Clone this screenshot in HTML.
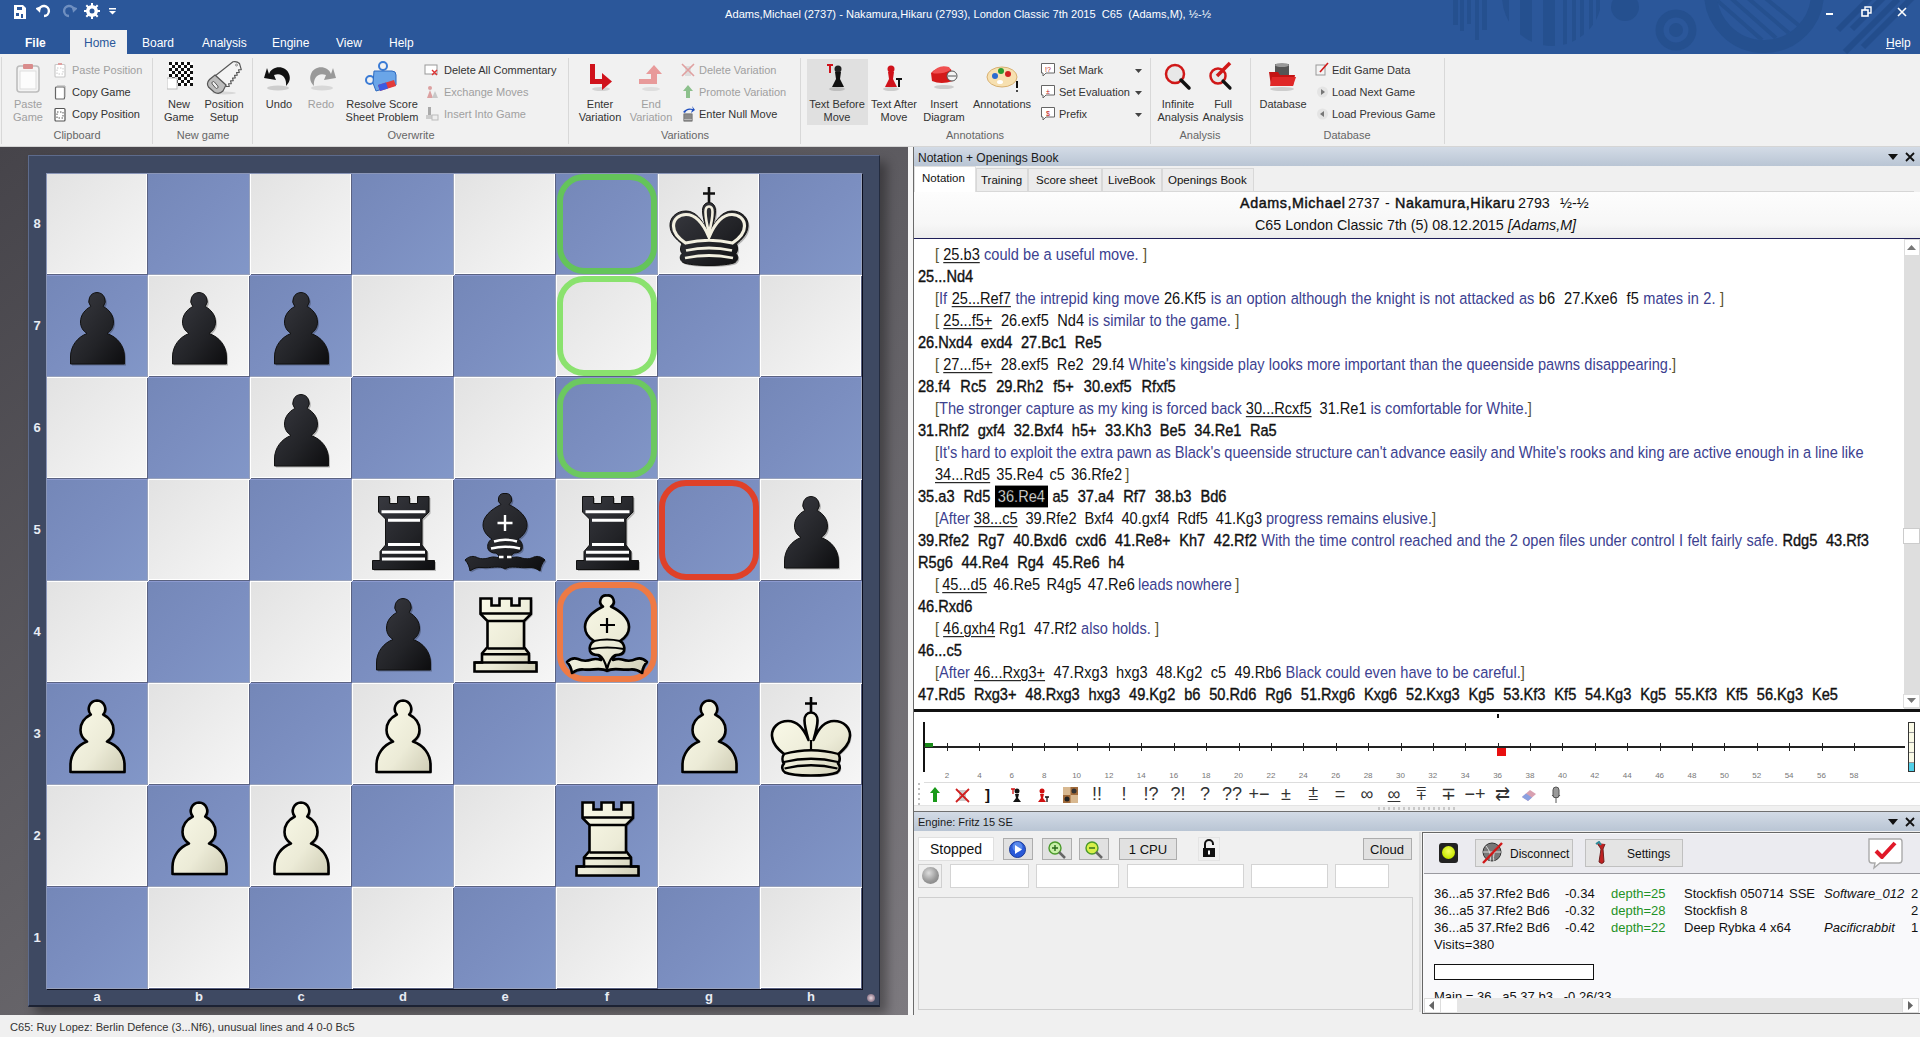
<!DOCTYPE html>
<html><head><meta charset="utf-8"><style>
*{box-sizing:border-box;margin:0;padding:0}
html,body{width:1920px;height:1037px;overflow:hidden;background:#f0f0f0;font-family:"Liberation Sans",sans-serif;position:relative}
.a{position:absolute}
.t{position:absolute;white-space:nowrap;line-height:1}
#title{left:0;top:0;width:1920px;height:54px;background:#2b579a;overflow:hidden}
#ribbon{left:0;top:54px;width:1920px;height:93px;background:#f1f1f1;border-bottom:1px solid #d5d5d5}
#boardpanel{left:0;top:147px;width:908px;height:868px;background:linear-gradient(145deg,#46444a 0%,#615f64 50%,#7d7a7f 100%)}
#split{left:908px;top:147px;width:5px;height:868px;background:#f6f6f6}
#right{left:913px;top:147px;width:1007px;height:868px;background:#f0f0f0;border-left:1px solid #6a6a6a}
#status{left:0;top:1015px;width:1920px;height:22px;background:#f0f0f0}
.sl{width:102px;height:102px;background:linear-gradient(135deg,#e2e2e2 0%,#ececec 50%,#f6f6f6 100%);box-shadow:inset 1px 1px 0 #fff,inset -1px -1px 0 #5a6282,inset -2px -2px 0 #fff}
.sd{width:102px;height:102px;background:linear-gradient(135deg,#7487b8 0%,#7b8ec0 50%,#8297c8 100%);box-shadow:inset 0 1px 0 #8c9ad0,inset -1px -1px 0 #98a2bc}
.mk{width:100px;height:100px;border:6px solid;border-radius:27px}
.pc{width:102px;height:102px;overflow:visible}
.pt{left:914px;width:1006px;height:19px;background:linear-gradient(180deg,#d3dbe6 0%,#b9c5d4 100%)}
.tab{top:168px;height:24px;background:#ececec;border:1px solid #d8d8d8}
.hd{font-size:14.3px;color:#111}
.sb{font-weight:normal;-webkit-text-stroke:0.45px #111;letter-spacing:0.6px}
.nl{position:absolute;white-space:nowrap;font-size:14.6px;line-height:22px;color:#111;transform:scaleY(1.09);transform-origin:0 5.7px}
.cm{color:#3c4190}
.main .mv{-webkit-text-stroke:0.35px #111}
.nl .u{-webkit-text-stroke:0}
.hl{-webkit-text-stroke:0.35px #fff}
.br{color:#5a5430}
.u{text-decoration:underline;text-underline-offset:2px}
.hl{background:#000;color:#fff;padding:2px 3px}
.crd{color:#e8ecf4;font-weight:bold;font-size:13px}
</style></head><body>
<svg width="0" height="0" style="position:absolute">
<defs>
<linearGradient id="gb" x1="0" y1="0" x2="1" y2="1"><stop offset="0" stop-color="#3a3b42"/><stop offset="0.6" stop-color="#222327"/><stop offset="1" stop-color="#0d0d0f"/></linearGradient>
<linearGradient id="gw" x1="0" y1="0" x2="1" y2="1"><stop offset="0" stop-color="#fbfbea"/><stop offset="0.6" stop-color="#ecebd7"/><stop offset="1" stop-color="#cfcdb5"/></linearGradient>
<!-- pawn shape -->
<path id="pawnS" d="M51,17.5 a8.5,8.5 0 0 1 6.2,14 C63,34.5 67.5,40 67.5,47 C67.5,52 65,56 61,58.5 C71.5,62 78.5,71 78.5,82 L78.5,89 L24.5,89 L24.5,82 C24.5,71 31.5,62 41,58.5 C37,56 34.5,52 34.5,47 C34.5,40 39,34.5 44.8,31.5 A8.5,8.5 0 0 1 51,17.5 Z"/>
<g id="bp"><use href="#pawnS" transform="translate(1.5,1.5)" fill="#000" opacity=".25"/><use href="#pawnS" fill="url(#gb)" stroke="#111" stroke-width="1"/></g>
<g id="wp"><use href="#pawnS" transform="translate(1.5,1.5)" fill="#000" opacity=".25"/><use href="#pawnS" fill="url(#gw)" stroke="#000" stroke-width="2.6" stroke-linejoin="round"/></g>
<!-- rook shape -->
<path id="rookS" d="M26.5,17.5 L37.5,17.5 L37.5,24.5 L45.5,24.5 L45.5,17.5 L57.5,17.5 L57.5,24.5 L65.5,24.5 L65.5,17.5 L77,17.5 L77,33 L70,40 L70,66 L75,72.5 L75,81.5 L82.5,81.5 L82.5,90.5 L20.5,90.5 L20.5,81.5 L28,81.5 L28,72.5 L33.5,66 L33.5,40 L26.5,33 Z"/>
<g id="br"><use href="#rookS" transform="translate(1.5,1.5)" fill="#000" opacity=".25"/><use href="#rookS" fill="url(#gb)" stroke="#111" stroke-width="1"/>
<path d="M29.5,32.7 L73.5,32.7 M36,41.3 L68,41.3 M36,65.4 L68,65.4 M30,73.3 L73,73.3 M30,80 L73,80" stroke="#fff" stroke-width="3" fill="none"/></g>
<g id="wr"><use href="#rookS" transform="translate(1.5,1.5)" fill="#000" opacity=".25"/><use href="#rookS" fill="url(#gw)" stroke="#000" stroke-width="2.6" stroke-linejoin="miter"/>
<path d="M26.5,32.5 L77,32.5 M33.5,40 L70,40 M33.5,67.5 L70,67.5 M28,73.3 L75,73.3 M20.5,81.5 L82.5,81.5" stroke="#000" stroke-width="2.4" fill="none"/></g>
<!-- bishop -->
<path id="bishS" d="M51,14.5 A6,6 0 0 1 55,25.5 C66,31 73,38 73,46 C73,52 69,57 64,60 C68,62 69,67 68,70 C67,73 63,74 60,74 C58,75 57,77 57,79 C60,78 63,77.5 66,78.5 C72,80.5 76,80 80,78 C84,76.5 88,78 91,81 C88,84 86.5,88 86,92 C82,89 78,88 74,88.5 C66,89.5 56,86 51,90 C46,86 36,89.5 28,88.5 C24,88 20,89 16,92 C15.5,88 14,84 11,81 C14,78 18,76.5 22,78 C26,80 30,80.5 36,78.5 C39,77.5 42,78 45,79 C45,77 44,75 42,74 C39,74 35,73 34,70 C33,67 34,62 38,60 C33,57 29,52 29,46 C29,38 36,31 47,25.5 A6,6 0 0 1 51,14.5 Z"/>
<g id="bb"><use href="#bishS" transform="translate(1.5,1.5)" fill="#000" opacity=".25"/><use href="#bishS" fill="url(#gb)" stroke="#111" stroke-width="1"/>
<path d="M51,36 L51,52 M43.5,44 L58.5,44 M40,62.5 Q51,59 63,62.5 M37,69.5 Q51,66 66,69.5 M45,78 h4.5 M53,78 h4.5" stroke="#fff" stroke-width="2.4" fill="none"/></g>
<g id="wb"><use href="#bishS" transform="translate(1.5,1.5)" fill="#000" opacity=".25"/><use href="#bishS" fill="url(#gw)" stroke="#000" stroke-width="2.6" stroke-linejoin="round"/>
<path d="M51,37 L51,52 M44,44 L59,44 M38,60 Q51,57 64,60 M35,68 Q51,65 68,68 M43,74 C47,76 49,80 51,88.5 M59,74 C55,76 53,80 51,88.5" stroke="#000" stroke-width="2.2" fill="none"/></g>
<!-- king -->
<path id="kingS" d="M51,29.5 C55,29.5 57.5,33 57.5,37.5 C57.5,43 55.5,50 53.5,57 C58,46 65,38 74,38 C84,38 90.5,45 90,53 C89.5,61 84,66 78.5,71 C80,74 80,78 78,80.5 C80.5,83 80.5,87 77,89.5 C68,93.5 34,93.5 25,89.5 C21.5,87 21.5,83 24,80.5 C22,78 22,74 24,71 C18,66 12.5,61 12,53 C11.5,45 18,38 28,38 C37,38 44,46 48.5,57 C46.5,50 44.5,43 44.5,37.5 C44.5,33 47,29.5 51,29.5 Z"/>
<g id="bk"><use href="#kingS" transform="translate(1.5,1.5)" fill="#000" opacity=".25"/><use href="#kingS" fill="url(#gb)" stroke="#111" stroke-width="1"/>
<path d="M51,14 L51,29.5 M45,20.5 L57,20.5" stroke="#111" stroke-width="2.6" fill="none"/>
<path d="M51,33.5 C53.5,33.5 54.5,36 54.5,39 C54.5,45 53,52 51,60 C49,52 47.5,45 47.5,39 C47.5,36 48.5,33.5 51,33.5 Z" fill="none" stroke="#f3f0e0" stroke-width="2.6"/>
<path d="M27.5,70 C20,65 15.5,60 15.5,53 C15.5,46 21,41.5 28,41.5 C37,41.5 45,50 51,64 C57,50 65,41.5 74,41.5 C81,41.5 86.5,46 86.5,53 C86.5,60 82,65 74.5,70 Q51,64.5 27.5,70 Z" fill="none" stroke="#f3f0e0" stroke-width="3.2"/>
<path d="M28,77.5 Q51,72.5 74,77.5 M27,85 Q51,80 75,85" stroke="#f3f0e0" stroke-width="2.8" fill="none"/></g>
<g id="wk"><use href="#kingS" transform="translate(1.5,1.5)" fill="#000" opacity=".25"/><use href="#kingS" fill="url(#gw)" stroke="#000" stroke-width="2.6" stroke-linejoin="round"/>
<path d="M51,14 L51,29.5 M45,20.5 L57,20.5" stroke="#000" stroke-width="2.6" fill="none"/>
<path d="M51,57 L51,67" stroke="#000" stroke-width="2.2" fill="none"/>
<path d="M24,71 Q51,63.5 78.5,71 M24,79 Q51,72.5 78,79 M24.5,85.5 Q51,79 77.5,85.5" stroke="#000" stroke-width="2.3" fill="none"/></g>
</defs></svg>

<div id="title" class="a"><svg class="a" style="left:1440px;top:0" width="480" height="54" viewBox="0 0 480 54">
<defs><clipPath id="semi"><circle cx="112" cy="-4" r="50"/></clipPath><clipPath id="ringc"><circle cx="324" cy="-7" r="47"/></clipPath></defs>
<g fill="#25508f">
<rect x="13" y="0" width="5" height="25"/><rect x="20" y="0" width="4" height="31"/><rect x="27" y="0" width="4" height="24"/><rect x="35" y="0" width="4" height="40"/><rect x="42" y="0" width="5" height="30"/>
<g clip-path="url(#semi)"><rect x="60" y="0" width="9" height="54"/><rect x="80" y="0" width="12" height="54"/><rect x="103" y="0" width="12" height="54"/><rect x="123" y="0" width="4" height="54"/><rect x="132" y="0" width="4" height="54"/><rect x="140" y="0" width="4" height="54"/><rect x="149" y="0" width="4" height="54"/><rect x="156" y="0" width="4" height="54"/></g>
<circle cx="185" cy="7" r="14"/>
<circle cx="236" cy="30" r="20.5"/>
</g>
<circle cx="236" cy="30" r="12.5" fill="#2b579a"/>
<circle cx="236" cy="30" r="7" fill="#25508f"/>
<circle cx="324" cy="-7" r="53.5" fill="none" stroke="#25508f" stroke-width="13"/>
<g stroke="#25508f" stroke-width="4" clip-path="url(#ringc)">
<path d="M272,-4 L322,40 M284,-8 L336,38 M296,-12 L350,34 M308,-16 L362,28"/>
</g>
<g stroke="#234d8c" stroke-width="6">
<path d="M398,30 L430,-2 M412,29 L443,-2 M405,52 L458,-1 M423,47 L472,-2"/>
</g>
</svg>
<svg class="a" style="left:13px;top:4px" width="14" height="16" viewBox="0 0 14 16"><path d="M1,1 L10,1 L13,4 L13,15 L1,15 Z" fill="#fff"/><rect x="4" y="3" width="5" height="3" fill="#2b579a"/><rect x="3" y="9" width="3" height="3" fill="#2b579a"/><rect x="8" y="10" width="2" height="4" fill="#2b579a"/></svg>
<svg class="a" style="left:36px;top:4px" width="16" height="14" viewBox="0 0 16 14"><path d="M3,6 A5,5 0 1 1 8,12" fill="none" stroke="#fff" stroke-width="2.4"/><path d="M0,3 L6,3 L3,9Z" fill="#fff" transform="rotate(-20 3 6)"/></svg>
<svg class="a" style="left:61px;top:4px" width="16" height="14" viewBox="0 0 16 14"><path d="M13,6 A5,5 0 1 0 8,12" fill="none" stroke="#6f8fc0" stroke-width="2.4"/><path d="M10,3 L16,3 L13,9Z" fill="#6f8fc0" transform="rotate(20 13 6)"/></svg>
<svg class="a" style="left:84px;top:3px" width="16" height="16" viewBox="0 0 16 16"><circle cx="8" cy="8" r="6" fill="#fff"/><g stroke="#fff" stroke-width="2"><path d="M8,0 L8,16 M0,8 L16,8 M2.3,2.3 L13.7,13.7 M13.7,2.3 L2.3,13.7"/></g><circle cx="8" cy="8" r="2.5" fill="#2b579a"/></svg>
<svg class="a" style="left:109px;top:8px" width="7" height="7" viewBox="0 0 7 7"><rect x="0" y="0" width="7" height="1.5" fill="#fff"/><path d="M0,3 L7,3 L3.5,6.5Z" fill="#fff"/></svg>

<div class="a" style="left:1826px;top:13px;width:7px;height:2px;background:#fff"></div>
<svg class="a" style="left:1861px;top:6px" width="11" height="11" viewBox="0 0 11 11"><rect x="1" y="4" width="6" height="6" fill="none" stroke="#fff" stroke-width="1.6"/><path d="M4,4 L4,1 L10,1 L10,7 L7,7" fill="none" stroke="#fff" stroke-width="1.4"/></svg>
<svg class="a" style="left:1897px;top:7px" width="10" height="10" viewBox="0 0 10 10"><path d="M1,1 L9,9 M9,1 L1,9" stroke="#fff" stroke-width="1.6"/></svg>

<div class="t" style="left:568px;width:800px;text-align:center;top:9px;font-size:11.1px;color:#fff">Adams,Michael (2737) - Nakamura,Hikaru (2793), London Classic 7th 2015&nbsp; C65&nbsp; (Adams,M), ½-½</div>
<div class="a" style="left:70px;top:30px;width:57px;height:25px;background:#f1f1f1"></div><div class="t" style="left:25px;top:36.6px;font-size:12px;color:#fff;font-weight:bold;">File</div><div class="t" style="left:84px;top:36.6px;font-size:12px;color:#2b579a;font-weight:normal;">Home</div><div class="t" style="left:142px;top:36.6px;font-size:12px;color:#fff;font-weight:normal;">Board</div><div class="t" style="left:202px;top:36.6px;font-size:12px;color:#fff;font-weight:normal;">Analysis</div><div class="t" style="left:272px;top:36.6px;font-size:12px;color:#fff;font-weight:normal;">Engine</div><div class="t" style="left:336px;top:36.6px;font-size:12px;color:#fff;font-weight:normal;">View</div><div class="t" style="left:389px;top:36.6px;font-size:12px;color:#fff;font-weight:normal;">Help</div><div class="t" style="left:1886px;top:36.6px;font-size:12px;color:#fff;font-weight:normal;"><u>H</u>elp</div></div>
<div id="ribbon" class="a"></div><div class="a" style="left:152px;top:58px;width:1px;height:86px;background:#d8d8d8"></div><div class="a" style="left:252px;top:58px;width:1px;height:86px;background:#d8d8d8"></div><div class="a" style="left:568px;top:58px;width:1px;height:86px;background:#d8d8d8"></div><div class="a" style="left:800px;top:58px;width:1px;height:86px;background:#d8d8d8"></div><div class="a" style="left:1150px;top:58px;width:1px;height:86px;background:#d8d8d8"></div><div class="a" style="left:1250px;top:58px;width:1px;height:86px;background:#d8d8d8"></div><div class="a" style="left:1444px;top:58px;width:1px;height:86px;background:#d8d8d8"></div><div class="a" style="left:1px;top:57px;width:1px;height:87px;background:#d8d8d8"></div><div class="a" style="left:807px;top:59px;width:61px;height:66px;background:#e0e0e0"></div><svg class="a" style="left:15px;top:62px" width="26" height="32" viewBox="0 0 26 32"><rect x="2" y="4" width="22" height="26" rx="3" fill="#f4f4f4" stroke="#bdbdbd" stroke-width="1.6"/><rect x="8" y="2" width="10" height="5" rx="1" fill="#d98c8c"/><rect x="5" y="9" width="16" height="18" fill="#fcfcfc" stroke="#ddd"/></svg><svg class="a" style="left:54px;top:63px" width="13" height="15" viewBox="0 0 13 15"><rect x="1" y="1.5" width="10" height="12.5" rx="1" fill="#fff" stroke="#c8c8c8" stroke-width="1.2"/><rect x="3" y="5" width="6" height="6" fill="none" stroke="#c8c8c8" stroke-dasharray="1.5 1.5"/><rect x='4' y='0' width='4' height='2' fill='#e0a0a0'/></svg><svg class="a" style="left:54px;top:85px" width="13" height="15" viewBox="0 0 13 15"><rect x="1.5" y="2" width="9" height="12" rx="1" fill="#fff" stroke="#666" stroke-width="1.2"/><path d="M3,1 L11,1 L11,12" fill="none" stroke="#aaa"/></svg><svg class="a" style="left:54px;top:107px" width="13" height="15" viewBox="0 0 13 15"><rect x="1" y="1.5" width="10" height="12.5" rx="1" fill="#fff" stroke="#555" stroke-width="1.2"/><rect x="3" y="5" width="6" height="6" fill="none" stroke="#555" stroke-dasharray="1.5 1.5"/></svg><svg class="a" style="left:167px;top:61px" width="28" height="30" viewBox="0 0 28 30"><rect x="2" y="1" width="24" height="24" fill="#fff"/><rect x="2" y="1" width="3" height="3" fill="#111"/><rect x="2" y="7" width="3" height="3" fill="#111"/><rect x="2" y="13" width="3" height="3" fill="#111"/><rect x="2" y="19" width="3" height="3" fill="#111"/><rect x="5" y="4" width="3" height="3" fill="#111"/><rect x="5" y="10" width="3" height="3" fill="#111"/><rect x="5" y="16" width="3" height="3" fill="#111"/><rect x="5" y="22" width="3" height="3" fill="#111"/><rect x="8" y="1" width="3" height="3" fill="#111"/><rect x="8" y="7" width="3" height="3" fill="#111"/><rect x="8" y="13" width="3" height="3" fill="#111"/><rect x="8" y="19" width="3" height="3" fill="#111"/><rect x="11" y="4" width="3" height="3" fill="#111"/><rect x="11" y="10" width="3" height="3" fill="#111"/><rect x="11" y="16" width="3" height="3" fill="#111"/><rect x="11" y="22" width="3" height="3" fill="#111"/><rect x="14" y="1" width="3" height="3" fill="#111"/><rect x="14" y="7" width="3" height="3" fill="#111"/><rect x="14" y="13" width="3" height="3" fill="#111"/><rect x="14" y="19" width="3" height="3" fill="#111"/><rect x="17" y="4" width="3" height="3" fill="#111"/><rect x="17" y="10" width="3" height="3" fill="#111"/><rect x="17" y="16" width="3" height="3" fill="#111"/><rect x="17" y="22" width="3" height="3" fill="#111"/><rect x="20" y="1" width="3" height="3" fill="#111"/><rect x="20" y="7" width="3" height="3" fill="#111"/><rect x="20" y="13" width="3" height="3" fill="#111"/><rect x="20" y="19" width="3" height="3" fill="#111"/><rect x="23" y="4" width="3" height="3" fill="#111"/><rect x="23" y="10" width="3" height="3" fill="#111"/><rect x="23" y="16" width="3" height="3" fill="#111"/><rect x="23" y="22" width="3" height="3" fill="#111"/><rect x="0" y="17" width="10" height="11" fill="#fff" stroke="#bbb"/></svg><svg class="a" style="left:206px;top:61px" width="36" height="34" viewBox="0 0 36 34"><ellipse cx="18" cy="32" rx="12" ry="1.5" fill="#000" opacity=".1"/><path d="M27,0.8 Q31,0 33.5,2.5 L34.5,6.0 L35.3,8.7 L32.5,8.8 L33.3,11.5 L30.5,11.6 L31.3,14.2 L28.5,14.4 L29.3,17.0 L26.5,17.1 L27.3,19.8 L24.5,19.9 L25.3,22.6 L22.5,22.7 L23.3,25.4 L20.5,25.5 L9,15 Z" fill="#f4f4f4" stroke="#555" stroke-width="1.1" stroke-linejoin="round"/><circle cx="30.5" cy="4" r="1" fill="none" stroke="#666" stroke-width=".7"/><path d="M9,14 L20,24 L17,30 Q13,34 8,31 L2.5,26 Q0,22 3.5,18.5 Z" fill="#bdbdbd" stroke="#555" stroke-width="1.2"/><rect x="7.5" y="20" width="3" height="8" rx="1.5" fill="#eee" stroke="#555" stroke-width=".9" transform="rotate(-40 9 24)"/></svg><svg class="a" style="left:262px;top:62px" width="32" height="30" viewBox="0 0 32 30"><ellipse cx="16" cy="26" rx="11" ry="2.5" fill="#000" opacity=".15"/><path d="M7,12 C10,3 24,3 27,12 C29,17 27,21 24,24 C25,16 20,10 12,13 L14,18 L2,16 L5,6 Z" fill="#111"/></svg><svg class="a" style="left:306px;top:62px" width="32" height="30" viewBox="0 0 32 30"><ellipse cx="16" cy="26" rx="11" ry="2.5" fill="#000" opacity=".1"/><path d="M25,12 C22,3 8,3 5,12 C3,17 5,21 8,24 C7,16 12,10 20,13 L18,18 L30,16 L27,6 Z" fill="#999"/></svg><svg class="a" style="left:364px;top:61px" width="36" height="34" viewBox="0 0 36 34"><circle cx="19" cy="5" r="4" fill="none" stroke="#3a7bd5" stroke-width="2"/><circle cx="6" cy="19" r="4" fill="none" stroke="#3a7bd5" stroke-width="2"/><path d="M10,10 L28,10 Q32,10 32,14 L32,24 L12,30 L9,22 Z" fill="#6aa5e8" stroke="#2e6bc0"/><path d="M14,24 L30,19 L32,25 L16,30Z" fill="#e23b3b"/><path d="M14,24 L22,21.5 L24,27.5 L16,30Z" fill="#3b5be2"/></svg><svg class="a" style="left:424px;top:63px" width="15" height="14" viewBox="0 0 15 14"><rect x="1" y="2" width="12" height="9" fill="#fff" stroke="#999"/><path d="M8,7 L13,12 M13,7 L8,12" stroke="#d33" stroke-width="1.4"/></svg><svg class="a" style="left:425px;top:84px" width="14" height="15" viewBox="0 0 14 15"><path d="M2,14 L5,6 L8,14Z" fill="#dca0a0"/><circle cx="5" cy="4" r="2" fill="#dca0a0"/><path d="M7,14 L10,7 L13,14Z" fill="#c8c8c8"/></svg><svg class="a" style="left:425px;top:106px" width="14" height="15" viewBox="0 0 14 15"><rect x="3" y="1" width="3" height="9" fill="#aaa"/><rect x="1" y="9" width="7" height="4" fill="#ccc"/><rect x="7" y="9" width="6" height="5" fill="#eee" stroke="#bbb"/></svg><svg class="a" style="left:587px;top:62px" width="28" height="30" viewBox="0 0 28 30"><ellipse cx="14" cy="27" rx="9" ry="2" fill="#000" opacity=".12"/><path d="M3,2 L8,2 L8,17 L15,17 L15,11 L25,19.5 L15,28 L15,22 L3,22 Z" fill="#d0121b"/></svg><svg class="a" style="left:637px;top:62px" width="28" height="30" viewBox="0 0 28 30"><ellipse cx="14" cy="27" rx="9" ry="2" fill="#000" opacity=".08"/><path d="M2,22 L2,17 L14,17 L14,12 L9,12 L17,3 L25,12 L20,12 L20,22 Z" fill="#e89a9a"/></svg><svg class="a" style="left:681px;top:62px" width="14" height="16" viewBox="0 0 14 16"><rect x="4" y="4" width="6" height="10" fill="#ddd"/><path d="M1,2 L13,14 M13,2 L1,14" stroke="#e0a0a0" stroke-width="1.6"/></svg><svg class="a" style="left:682px;top:84px" width="12" height="16" viewBox="0 0 12 16"><path d="M6,1 L11,7 L8,7 L8,14 L4,14 L4,7 L1,7Z" fill="#8cc08c"/></svg><svg class="a" style="left:681px;top:106px" width="14" height="16" viewBox="0 0 14 16"><path d="M2,6 Q6,1 12,3 L11,0 L14,4 L10,7 L11,4 Q6,3 4,7Z" fill="#2050c0"/><rect x="3" y="8" width="8" height="7" fill="#fff" stroke="#333" stroke-width=".8"/><path d="M3,10 h8 M3,12 h8 M5,8 v7 M7,8 v7 M9,8 v7" stroke="#333" stroke-width=".7"/></svg><svg class="a" style="left:823px;top:62px" width="28" height="30" viewBox="0 0 28 30"><ellipse cx="14" cy="27" rx="8" ry="2" fill="#000" opacity=".15"/><circle cx="15" cy="7" r="3.5" fill="#222"/><path d="M12,10 L18,10 L17,17 L21,25 L9,25 L13,17Z" fill="#111"/><path d="M4,3 L10,3 M7,3 L7,11" stroke="#d0121b" stroke-width="2"/></svg><svg class="a" style="left:879px;top:62px" width="28" height="30" viewBox="0 0 28 30"><ellipse cx="12" cy="27" rx="8" ry="2" fill="#000" opacity=".15"/><circle cx="12" cy="7" r="3.5" fill="#d0121b"/><path d="M9,10 L15,10 L14,17 L18,25 L6,25 L10,17Z" fill="#d0121b"/><path d="M17,17 L23,17 M20,17 L20,25" stroke="#111" stroke-width="2"/></svg><svg class="a" style="left:929px;top:63px" width="30" height="28" viewBox="0 0 30 28"><ellipse cx="15" cy="24" rx="10" ry="2" fill="#000" opacity=".15"/><path d="M2,10 Q8,3 22,6 L24,18 Q12,22 3,18 Z" fill="#d41a1a"/><path d="M3,10 Q12,12 22,7 L20,4 Q9,1 3,10Z" fill="#f05050"/><circle cx="23" cy="13" r="5" fill="#f4f4f4" stroke="#555"/><path d="M19,13 L27,13" stroke="#555"/></svg><svg class="a" style="left:985px;top:63px" width="36" height="30" viewBox="0 0 36 30"><ellipse cx="17" cy="14" rx="15" ry="10" fill="#f7e0b0" stroke="#d8b070"/><circle cx="10" cy="13" r="3" fill="#2a6ad0"/><circle cx="16" cy="8" r="3" fill="#2a9a30"/><circle cx="23" cy="11" r="3" fill="#d02020"/><ellipse cx="15" cy="19" rx="3" ry="2" fill="#fff"/><path d="M32,18 L32,25" stroke="#111" stroke-width="2"/><circle cx="32" cy="28" r="1" fill="#111"/></svg><svg class="a" style="left:1040px;top:62px" width="16" height="16" viewBox="0 0 16 16"><path d="M1.5,1.5 L14.5,1.5 L14.5,11 L6,11 L3,14 L3,11 L1.5,11Z" fill="#fff" stroke="#666"/><text x="8" y="9.5" font-size="7" text-anchor="middle" fill="#c01010" font-family="Liberation Sans">!?</text></svg><svg class="a" style="left:1040px;top:84px" width="16" height="16" viewBox="0 0 16 16"><path d="M1.5,1.5 L14.5,1.5 L14.5,11 L6,11 L3,14 L3,11 L1.5,11Z" fill="#fff" stroke="#666"/><text x="8" y="9.5" font-size="7" text-anchor="middle" fill="#c01010" font-family="Liberation Sans">±</text></svg><svg class="a" style="left:1040px;top:106px" width="16" height="16" viewBox="0 0 16 16"><path d="M1.5,1.5 L14.5,1.5 L14.5,11 L6,11 L3,14 L3,11 L1.5,11Z" fill="#fff" stroke="#666"/><text x="8" y="9.5" font-size="7" text-anchor="middle" fill="#c01010" font-family="Liberation Sans">$</text></svg><svg class="a" style="left:1135px;top:69px" width="7" height="4" viewBox="0 0 7 4"><path d="M0,0 L7,0 L3.5,4Z" fill="#444"/></svg><svg class="a" style="left:1135px;top:91px" width="7" height="4" viewBox="0 0 7 4"><path d="M0,0 L7,0 L3.5,4Z" fill="#444"/></svg><svg class="a" style="left:1135px;top:113px" width="7" height="4" viewBox="0 0 7 4"><path d="M0,0 L7,0 L3.5,4Z" fill="#444"/></svg><svg class="a" style="left:1163px;top:62px" width="30" height="30" viewBox="0 0 30 30"><circle cx="12" cy="12" r="9" fill="#e8e8e8" stroke="#d01818" stroke-width="2.5"/><path d="M18,18 L26,26" stroke="#111" stroke-width="3.5" stroke-linecap="round"/></svg><svg class="a" style="left:1208px;top:61px" width="30" height="30" viewBox="0 0 30 30"><circle cx="10" cy="15" r="7.5" fill="#e8e8e8" stroke="#d01818" stroke-width="2.5"/><path d="M15,20 L22,27" stroke="#111" stroke-width="3.2" stroke-linecap="round"/><path d="M9,15 L22,2" stroke="#d01818" stroke-width="3.5"/></svg><svg class="a" style="left:1266px;top:62px" width="32" height="30" viewBox="0 0 32 30"><ellipse cx="16" cy="27" rx="12" ry="2" fill="#000" opacity=".15"/><rect x="9" y="2" width="14" height="12" fill="#555"/><ellipse cx="16" cy="3" rx="7" ry="2" fill="#999"/><path d="M3,10 L12,10 L14,13 L29,13 L27,24 L5,24Z" fill="#c41414"/><path d="M6,15 L30,15 L27,24 L4,24Z" fill="#e02828"/></svg><svg class="a" style="left:1315px;top:62px" width="14" height="15" viewBox="0 0 14 15"><rect x="1" y="3" width="9" height="10" fill="#f4f4f4" stroke="#999"/><path d="M5,10 L13,1" stroke="#d01818" stroke-width="1.6"/></svg><svg class="a" style="left:1316px;top:85px" width="13" height="14" viewBox="0 0 13 14"><circle cx="6.5" cy="7" r="5.5" fill="#e4e4e4"/><path d="M5,4 L9,7 L5,10Z" fill="#777"/></svg><svg class="a" style="left:1316px;top:107px" width="13" height="14" viewBox="0 0 13 14"><circle cx="6.5" cy="7" r="5.5" fill="#e4e4e4"/><path d="M8,4 L4,7 L8,10Z" fill="#777"/></svg><div class="t" style="left:-172px;width:400px;text-align:center;top:99.2px;font-size:11px;color:#a0a0a0;font-weight:normal;">Paste</div><div class="t" style="left:-172px;width:400px;text-align:center;top:112.2px;font-size:11px;color:#a0a0a0;font-weight:normal;">Game</div><div class="t" style="left:72px;top:65.2px;font-size:11px;color:#a0a0a0;font-weight:normal;">Paste Position</div><div class="t" style="left:72px;top:87.2px;font-size:11px;color:#333;font-weight:normal;">Copy Game</div><div class="t" style="left:72px;top:109.2px;font-size:11px;color:#333;font-weight:normal;">Copy Position</div><div class="t" style="left:-123px;width:400px;text-align:center;top:130.2px;font-size:11px;color:#666;font-weight:normal;">Clipboard</div><div class="t" style="left:-21px;width:400px;text-align:center;top:99.2px;font-size:11px;color:#333;font-weight:normal;">New</div><div class="t" style="left:-21px;width:400px;text-align:center;top:112.2px;font-size:11px;color:#333;font-weight:normal;">Game</div><div class="t" style="left:24px;width:400px;text-align:center;top:99.2px;font-size:11px;color:#333;font-weight:normal;">Position</div><div class="t" style="left:24px;width:400px;text-align:center;top:112.2px;font-size:11px;color:#333;font-weight:normal;">Setup</div><div class="t" style="left:3px;width:400px;text-align:center;top:130.2px;font-size:11px;color:#666;font-weight:normal;">New game</div><div class="t" style="left:79px;width:400px;text-align:center;top:99.2px;font-size:11px;color:#333;font-weight:normal;">Undo</div><div class="t" style="left:121px;width:400px;text-align:center;top:99.2px;font-size:11px;color:#a0a0a0;font-weight:normal;">Redo</div><div class="t" style="left:182px;width:400px;text-align:center;top:99.2px;font-size:11px;color:#333;font-weight:normal;">Resolve Score</div><div class="t" style="left:182px;width:400px;text-align:center;top:112.2px;font-size:11px;color:#333;font-weight:normal;">Sheet Problem</div><div class="t" style="left:444px;top:65.2px;font-size:11px;color:#333;font-weight:normal;">Delete All Commentary</div><div class="t" style="left:444px;top:87.2px;font-size:11px;color:#a0a0a0;font-weight:normal;">Exchange Moves</div><div class="t" style="left:444px;top:109.2px;font-size:11px;color:#a0a0a0;font-weight:normal;">Insert Into Game</div><div class="t" style="left:211px;width:400px;text-align:center;top:130.2px;font-size:11px;color:#666;font-weight:normal;">Overwrite</div><div class="t" style="left:400px;width:400px;text-align:center;top:99.2px;font-size:11px;color:#333;font-weight:normal;">Enter</div><div class="t" style="left:400px;width:400px;text-align:center;top:112.2px;font-size:11px;color:#333;font-weight:normal;">Variation</div><div class="t" style="left:451px;width:400px;text-align:center;top:99.2px;font-size:11px;color:#a0a0a0;font-weight:normal;">End</div><div class="t" style="left:451px;width:400px;text-align:center;top:112.2px;font-size:11px;color:#a0a0a0;font-weight:normal;">Variation</div><div class="t" style="left:699px;top:65.2px;font-size:11px;color:#a0a0a0;font-weight:normal;">Delete Variation</div><div class="t" style="left:699px;top:87.2px;font-size:11px;color:#a0a0a0;font-weight:normal;">Promote Variation</div><div class="t" style="left:699px;top:109.2px;font-size:11px;color:#333;font-weight:normal;">Enter Null Move</div><div class="t" style="left:485px;width:400px;text-align:center;top:130.2px;font-size:11px;color:#666;font-weight:normal;">Variations</div><div class="t" style="left:637px;width:400px;text-align:center;top:99.2px;font-size:11px;color:#333;font-weight:normal;">Text Before</div><div class="t" style="left:637px;width:400px;text-align:center;top:112.2px;font-size:11px;color:#333;font-weight:normal;">Move</div><div class="t" style="left:694px;width:400px;text-align:center;top:99.2px;font-size:11px;color:#333;font-weight:normal;">Text After</div><div class="t" style="left:694px;width:400px;text-align:center;top:112.2px;font-size:11px;color:#333;font-weight:normal;">Move</div><div class="t" style="left:744px;width:400px;text-align:center;top:99.2px;font-size:11px;color:#333;font-weight:normal;">Insert</div><div class="t" style="left:744px;width:400px;text-align:center;top:112.2px;font-size:11px;color:#333;font-weight:normal;">Diagram</div><div class="t" style="left:802px;width:400px;text-align:center;top:99.2px;font-size:11px;color:#333;font-weight:normal;">Annotations</div><div class="t" style="left:1059px;top:65.2px;font-size:11px;color:#333;font-weight:normal;">Set Mark</div><div class="t" style="left:1059px;top:87.2px;font-size:11px;color:#333;font-weight:normal;">Set Evaluation</div><div class="t" style="left:1059px;top:109.2px;font-size:11px;color:#333;font-weight:normal;">Prefix</div><div class="t" style="left:775px;width:400px;text-align:center;top:130.2px;font-size:11px;color:#666;font-weight:normal;">Annotations</div><div class="t" style="left:978px;width:400px;text-align:center;top:99.2px;font-size:11px;color:#333;font-weight:normal;">Infinite</div><div class="t" style="left:978px;width:400px;text-align:center;top:112.2px;font-size:11px;color:#333;font-weight:normal;">Analysis</div><div class="t" style="left:1023px;width:400px;text-align:center;top:99.2px;font-size:11px;color:#333;font-weight:normal;">Full</div><div class="t" style="left:1023px;width:400px;text-align:center;top:112.2px;font-size:11px;color:#333;font-weight:normal;">Analysis</div><div class="t" style="left:1000px;width:400px;text-align:center;top:130.2px;font-size:11px;color:#666;font-weight:normal;">Analysis</div><div class="t" style="left:1083px;width:400px;text-align:center;top:99.2px;font-size:11px;color:#333;font-weight:normal;">Database</div><div class="t" style="left:1332px;top:65.2px;font-size:11px;color:#333;font-weight:normal;">Edit Game Data</div><div class="t" style="left:1332px;top:87.2px;font-size:11px;color:#333;font-weight:normal;">Load Next Game</div><div class="t" style="left:1332px;top:109.2px;font-size:11px;color:#333;font-weight:normal;">Load Previous Game</div><div class="t" style="left:1147px;width:400px;text-align:center;top:130.2px;font-size:11px;color:#666;font-weight:normal;">Database</div>

<div id="boardpanel" class="a">
 <div class="a" style="left:28px;top:8px;width:852px;height:852px;box-shadow:7px 7px 10px rgba(0,0,0,.35)"></div>
 <div class="a" style="left:28px;top:8px;width:852px;height:852px;background:#3e4962;border-top:1px solid #5d6b8c;border-left:1px solid #5d6b8c;border-right:1px solid #232b3e;border-bottom:2px solid #1c2233"></div>
</div>
<div class="a sl" style="left:46px;top:173px"></div><div class="a sd" style="left:148px;top:173px"></div><div class="a sl" style="left:250px;top:173px"></div><div class="a sd" style="left:352px;top:173px"></div><div class="a sl" style="left:454px;top:173px"></div><div class="a sd" style="left:556px;top:173px"></div><div class="a sl" style="left:658px;top:173px"></div><div class="a sd" style="left:760px;top:173px"></div><div class="a sd" style="left:46px;top:275px"></div><div class="a sl" style="left:148px;top:275px"></div><div class="a sd" style="left:250px;top:275px"></div><div class="a sl" style="left:352px;top:275px"></div><div class="a sd" style="left:454px;top:275px"></div><div class="a sl" style="left:556px;top:275px"></div><div class="a sd" style="left:658px;top:275px"></div><div class="a sl" style="left:760px;top:275px"></div><div class="a sl" style="left:46px;top:377px"></div><div class="a sd" style="left:148px;top:377px"></div><div class="a sl" style="left:250px;top:377px"></div><div class="a sd" style="left:352px;top:377px"></div><div class="a sl" style="left:454px;top:377px"></div><div class="a sd" style="left:556px;top:377px"></div><div class="a sl" style="left:658px;top:377px"></div><div class="a sd" style="left:760px;top:377px"></div><div class="a sd" style="left:46px;top:479px"></div><div class="a sl" style="left:148px;top:479px"></div><div class="a sd" style="left:250px;top:479px"></div><div class="a sl" style="left:352px;top:479px"></div><div class="a sd" style="left:454px;top:479px"></div><div class="a sl" style="left:556px;top:479px"></div><div class="a sd" style="left:658px;top:479px"></div><div class="a sl" style="left:760px;top:479px"></div><div class="a sl" style="left:46px;top:581px"></div><div class="a sd" style="left:148px;top:581px"></div><div class="a sl" style="left:250px;top:581px"></div><div class="a sd" style="left:352px;top:581px"></div><div class="a sl" style="left:454px;top:581px"></div><div class="a sd" style="left:556px;top:581px"></div><div class="a sl" style="left:658px;top:581px"></div><div class="a sd" style="left:760px;top:581px"></div><div class="a sd" style="left:46px;top:683px"></div><div class="a sl" style="left:148px;top:683px"></div><div class="a sd" style="left:250px;top:683px"></div><div class="a sl" style="left:352px;top:683px"></div><div class="a sd" style="left:454px;top:683px"></div><div class="a sl" style="left:556px;top:683px"></div><div class="a sd" style="left:658px;top:683px"></div><div class="a sl" style="left:760px;top:683px"></div><div class="a sl" style="left:46px;top:785px"></div><div class="a sd" style="left:148px;top:785px"></div><div class="a sl" style="left:250px;top:785px"></div><div class="a sd" style="left:352px;top:785px"></div><div class="a sl" style="left:454px;top:785px"></div><div class="a sd" style="left:556px;top:785px"></div><div class="a sl" style="left:658px;top:785px"></div><div class="a sd" style="left:760px;top:785px"></div><div class="a sd" style="left:46px;top:887px"></div><div class="a sl" style="left:148px;top:887px"></div><div class="a sd" style="left:250px;top:887px"></div><div class="a sl" style="left:352px;top:887px"></div><div class="a sd" style="left:454px;top:887px"></div><div class="a sl" style="left:556px;top:887px"></div><div class="a sd" style="left:658px;top:887px"></div><div class="a sl" style="left:760px;top:887px"></div><div class="a mk" style="left:557px;top:174px;border-color:#64c45a"></div><div class="a mk" style="left:557px;top:276px;border-color:#8ae26e"></div><div class="a mk" style="left:557px;top:378px;border-color:#6cc860"></div><div class="a mk" style="left:659px;top:480px;border-color:#df4129"></div><div class="a mk" style="left:557px;top:582px;border-color:#ee7a45"></div>
<svg class="a pc" style="left:658px;top:173px" viewBox="0 0 102 102"><use href="#bk"/></svg><svg class="a pc" style="left:46px;top:275px" viewBox="0 0 102 102"><use href="#bp"/></svg><svg class="a pc" style="left:148px;top:275px" viewBox="0 0 102 102"><use href="#bp"/></svg><svg class="a pc" style="left:250px;top:275px" viewBox="0 0 102 102"><use href="#bp"/></svg><svg class="a pc" style="left:250px;top:377px" viewBox="0 0 102 102"><use href="#bp"/></svg><svg class="a pc" style="left:352px;top:479px" viewBox="0 0 102 102"><use href="#br"/></svg><svg class="a pc" style="left:454px;top:479px" viewBox="0 0 102 102"><use href="#bb"/></svg><svg class="a pc" style="left:556px;top:479px" viewBox="0 0 102 102"><use href="#br"/></svg><svg class="a pc" style="left:760px;top:479px" viewBox="0 0 102 102"><use href="#bp"/></svg><svg class="a pc" style="left:352px;top:581px" viewBox="0 0 102 102"><use href="#bp"/></svg><svg class="a pc" style="left:454px;top:581px" viewBox="0 0 102 102"><use href="#wr"/></svg><svg class="a pc" style="left:556px;top:581px" viewBox="0 0 102 102"><use href="#wb"/></svg><svg class="a pc" style="left:46px;top:683px" viewBox="0 0 102 102"><use href="#wp"/></svg><svg class="a pc" style="left:352px;top:683px" viewBox="0 0 102 102"><use href="#wp"/></svg><svg class="a pc" style="left:658px;top:683px" viewBox="0 0 102 102"><use href="#wp"/></svg><svg class="a pc" style="left:760px;top:683px" viewBox="0 0 102 102"><use href="#wk"/></svg><svg class="a pc" style="left:148px;top:785px" viewBox="0 0 102 102"><use href="#wp"/></svg><svg class="a pc" style="left:250px;top:785px" viewBox="0 0 102 102"><use href="#wp"/></svg><svg class="a pc" style="left:556px;top:785px" viewBox="0 0 102 102"><use href="#wr"/></svg>
<div class="a" style="left:46px;top:173px;width:817px;height:817px;border-right:1px solid #0a0c1c;border-bottom:1px solid #0a0c1c;border-top:1px solid #8a96b8;border-left:1px solid #8a96b8"></div>
<div class="t crd" style="left:46px;top:990px;width:102px;text-align:center">a</div><div class="t crd" style="left:28px;top:217px;width:18px;text-align:center">8</div><div class="t crd" style="left:148px;top:990px;width:102px;text-align:center">b</div><div class="t crd" style="left:28px;top:319px;width:18px;text-align:center">7</div><div class="t crd" style="left:250px;top:990px;width:102px;text-align:center">c</div><div class="t crd" style="left:28px;top:421px;width:18px;text-align:center">6</div><div class="t crd" style="left:352px;top:990px;width:102px;text-align:center">d</div><div class="t crd" style="left:28px;top:523px;width:18px;text-align:center">5</div><div class="t crd" style="left:454px;top:990px;width:102px;text-align:center">e</div><div class="t crd" style="left:28px;top:625px;width:18px;text-align:center">4</div><div class="t crd" style="left:556px;top:990px;width:102px;text-align:center">f</div><div class="t crd" style="left:28px;top:727px;width:18px;text-align:center">3</div><div class="t crd" style="left:658px;top:990px;width:102px;text-align:center">g</div><div class="t crd" style="left:28px;top:829px;width:18px;text-align:center">2</div><div class="t crd" style="left:760px;top:990px;width:102px;text-align:center">h</div><div class="t crd" style="left:28px;top:931px;width:18px;text-align:center">1</div>
<div class="a" style="left:867px;top:994px;width:8px;height:8px;border-radius:50%;background:radial-gradient(circle,#e8d8e0 0%,#a08898 60%,rgba(120,100,120,0) 100%)"></div>

<div id="split" class="a"></div>
<div id="right" class="a"></div>
<div class="a pt" style="top:147px"></div><div class="t" style="left:918px;top:151.6px;font-size:12px;color:#1a1a1a;font-weight:normal;">Notation + Openings Book</div><svg class="a" style="left:1888px;top:154px" width="10" height="6" viewBox="0 0 10 6"><path d="M0,0 L10,0 L5,6Z" fill="#111"/></svg><svg class="a" style="left:1905px;top:152px" width="10" height="10" viewBox="0 0 10 10"><path d="M1,1 L9,9 M9,1 L1,9" stroke="#111" stroke-width="1.8"/></svg><div class="a" style="left:914px;top:191px;width:1000px;height:1px;background:#d6d6d6"></div><div class="a tab" style="left:976px;width:52px"></div><div class="a tab" style="left:1028px;width:74px"></div><div class="a tab" style="left:1102px;width:60px"></div><div class="a tab" style="left:1162px;width:92px"></div><div class="a" style="left:914px;top:166px;width:62px;height:26px;background:#fff;border:1px solid #e0e0e0;border-bottom:none"></div><div class="t" style="left:922px;top:172.9px;font-size:11.5px;color:#111;font-weight:normal;">Notation</div><div class="t" style="left:981px;top:174.9px;font-size:11.5px;color:#111;font-weight:normal;">Training</div><div class="t" style="left:1036px;top:174.9px;font-size:11.5px;color:#111;font-weight:normal;">Score sheet</div><div class="t" style="left:1108px;top:174.9px;font-size:11.5px;color:#111;font-weight:normal;">LiveBook</div><div class="t" style="left:1168px;top:174.9px;font-size:11.5px;color:#111;font-weight:normal;">Openings Book</div><div class="a" style="left:914px;top:192px;width:1006px;height:46px;background:linear-gradient(180deg,#fdfdfd 0%,#f7f7f7 70%,#ececec 100%)"></div><div class="a" style="left:914px;top:237.5px;width:1006px;height:1.5px;background:#1e1e58"></div><div class="t hd sb" style="left:1240px;top:196px">Adams,Michael</div><div class="t hd" style="left:1348px;top:196px">2737</div><div class="t hd" style="left:1385px;top:196px">-</div><div class="t hd sb" style="left:1395px;top:196px">Nakamura,Hikaru</div><div class="t hd" style="left:1518px;top:196px">2793</div><div class="t hd" style="left:1560px;top:196px">½-½</div><div class="t hd" style="left:1255px;top:218px">C65 London Classic 7th (5) 08.12.2015 <i>[Adams,M]</i></div><div class="a" style="left:914px;top:239px;width:1006px;height:470px;background:#fff"></div><div class="a" style="left:1904px;top:239px;width:16px;height:470px;background:#dedede"></div><div class="a" style="left:1904px;top:239px;width:16px;height:17px;background:#fff;border:1px solid #ddd"></div><svg class="a" style="left:1907px;top:245px" width="9" height="5" viewBox="0 0 9 5"><path d="M0,5 L9,5 L4.5,0Z" fill="#777"/></svg><div class="a" style="left:1903px;top:528px;width:17px;height:16px;background:#fff;border:1px solid #ccc"></div><div class="a" style="left:1903px;top:694px;width:17px;height:14px;background:#fff;border:1px solid #ddd"></div><svg class="a" style="left:1907px;top:698px" width="9" height="5" viewBox="0 0 9 5"><path d="M0,0 L9,0 L4.5,5Z" fill="#777"/></svg><div class="nl" style="left:935px;top:243px;word-spacing:0.14px"><span class="br">[ </span><span class="mv u">25.b3</span><span class="cm"> could be a useful move. </span><span class="br">]</span></div><div class="nl main" style="left:918px;top:265px;word-spacing:0px"><span class="mv">25...Nd4</span></div><div class="nl" style="left:935px;top:287px;word-spacing:0.44px"><span class="br">[</span><span class="cm">If </span><span class="mv u">25...Ref7</span><span class="cm"> the intrepid king move </span> <span class="mv">26.Kf5</span><span class="cm"> is an option although the knight is not attacked as </span> <span class="mv">b6</span>&nbsp; <span class="mv">27.Kxe6</span>&nbsp; <span class="mv">f5</span><span class="cm"> mates in 2. </span><span class="br">]</span></div><div class="nl" style="left:935px;top:309px;word-spacing:0.18px"><span class="br">[ </span><span class="mv u">25...f5+</span>&nbsp; <span class="mv">26.exf5</span>&nbsp; <span class="mv">Nd4</span><span class="cm"> is similar to the game. </span><span class="br">]</span></div><div class="nl main" style="left:918px;top:331px;word-spacing:0.17px"><span class="mv">26.Nxd4&nbsp; exd4&nbsp; 27.Bc1&nbsp; Re5</span></div><div class="nl" style="left:935px;top:353px;word-spacing:0.11px"><span class="br">[ </span><span class="mv u">27...f5+</span>&nbsp; <span class="mv">28.exf5&nbsp; Re2&nbsp; 29.f4</span><span class="cm"> White's kingside play looks more important than the queenside pawns disappearing.</span><span class="br">]</span></div><div class="nl main" style="left:918px;top:375px;word-spacing:0.9px"><span class="mv">28.f4&nbsp; Rc5&nbsp; 29.Rh2&nbsp; f5+&nbsp; 30.exf5&nbsp; Rfxf5</span></div><div class="nl" style="left:935px;top:397px;word-spacing:-0.07px"><span class="br">[</span><span class="cm">The stronger capture as my king is forced back </span><span class="mv u">30...Rcxf5</span>&nbsp; <span class="mv">31.Re1</span><span class="cm"> is comfortable for White.</span><span class="br">]</span></div><div class="nl main" style="left:918px;top:419px;word-spacing:0.21px"><span class="mv">31.Rhf2&nbsp; gxf4&nbsp; 32.Bxf4&nbsp; h5+&nbsp; 33.Kh3&nbsp; Be5&nbsp; 34.Re1&nbsp; Ra5</span></div><div class="nl" style="left:935px;top:441px;word-spacing:-0.2px"><span class="br">[</span><span class="cm">It's hard to exploit the extra pawn as Black's queenside structure can't advance easily and White's rooks and king are active enough in a line like</span></div><div class="nl" style="left:935px;top:463px;word-spacing:-1.0px"><span class="mv u">34...Rd5</span>&nbsp; <span class="mv">35.Re4&nbsp; c5&nbsp; 36.Rfe2</span><span class="br"> ]</span></div><div class="nl main" style="left:918px;top:485px;word-spacing:0.46px"><span class="mv">35.a3&nbsp; Rd5 </span><span class="mv hl">36.Re4</span><span class="mv"> a5&nbsp; 37.a4&nbsp; Rf7&nbsp; 38.b3&nbsp; Bd6</span></div><div class="nl" style="left:935px;top:507px;word-spacing:-0.14px"><span class="br">[</span><span class="cm">After </span><span class="mv u">38...c5</span>&nbsp; <span class="mv">39.Rfe2&nbsp; Bxf4&nbsp; 40.gxf4&nbsp; Rdf5&nbsp; 41.Kg3</span><span class="cm"> progress remains elusive.</span><span class="br">]</span></div><div class="nl main" style="left:918px;top:529px;word-spacing:0.28px"><span class="mv">39.Rfe2&nbsp; Rg7&nbsp; 40.Bxd6&nbsp; cxd6&nbsp; 41.Re8+&nbsp; Kh7&nbsp; 42.Rf2</span><span class="cm"> With the time control reached and the 2 open files under control I felt fairly safe. </span> <span class="mv">Rdg5&nbsp; 43.Rf3</span></div><div class="nl main" style="left:918px;top:551px;word-spacing:0.25px"><span class="mv">R5g6&nbsp; 44.Re4&nbsp; Rg4&nbsp; 45.Re6&nbsp; h4</span></div><div class="nl" style="left:935px;top:573px;word-spacing:-0.9px"><span class="br">[ </span><span class="mv u">45...d5</span>&nbsp; <span class="mv">46.Re5&nbsp; R4g5&nbsp; 47.Re6</span><span class="cm"> leads nowhere </span><span class="br">]</span></div><div class="nl main" style="left:918px;top:595px;word-spacing:0px"><span class="mv">46.Rxd6</span></div><div class="nl" style="left:935px;top:617px;word-spacing:0px"><span class="br">[ </span><span class="mv u">46.gxh4</span> <span class="mv">Rg1&nbsp; 47.Rf2</span><span class="cm"> also holds. </span><span class="br">]</span></div><div class="nl main" style="left:918px;top:639px;word-spacing:0px"><span class="mv">46...c5</span></div><div class="nl" style="left:935px;top:661px;word-spacing:0.11px"><span class="br">[</span><span class="cm">After </span><span class="mv u">46...Rxg3+</span>&nbsp; <span class="mv">47.Rxg3&nbsp; hxg3&nbsp; 48.Kg2&nbsp; c5&nbsp; 49.Rb6</span><span class="cm"> Black could even have to be careful.</span><span class="br">]</span></div><div class="nl main" style="left:918px;top:683px;word-spacing:0.37px"><span class="mv">47.Rd5&nbsp; Rxg3+&nbsp; 48.Rxg3&nbsp; hxg3&nbsp; 49.Kg2&nbsp; b6&nbsp; 50.Rd6&nbsp; Rg6&nbsp; 51.Rxg6&nbsp; Kxg6&nbsp; 52.Kxg3&nbsp; Kg5&nbsp; 53.Kf3&nbsp; Kf5&nbsp; 54.Kg3&nbsp; Kg5&nbsp; 55.Kf3&nbsp; Kf5&nbsp; 56.Kg3&nbsp; Ke5</span></div><div class="a" style="left:914px;top:712px;width:1006px;height:96px;background:#fff"></div><div class="a" style="left:914px;top:709px;width:1006px;height:3px;background:#111"></div><div class="a" style="left:923px;top:722px;width:2px;height:50px;background:#111"></div><div class="a" style="left:924px;top:746px;width:981px;height:1.5px;background:#222"></div><div class="a" style="left:925px;top:743px;width:8px;height:4px;background:#1a8a1a"></div><div class="t" style="left:932.0px;width:30px;text-align:center;top:772px;font-size:8px;color:#777">2</div><div class="t" style="left:964.4px;width:30px;text-align:center;top:772px;font-size:8px;color:#777">4</div><div class="t" style="left:996.8px;width:30px;text-align:center;top:772px;font-size:8px;color:#777">6</div><div class="t" style="left:1029.2px;width:30px;text-align:center;top:772px;font-size:8px;color:#777">8</div><div class="t" style="left:1061.6px;width:30px;text-align:center;top:772px;font-size:8px;color:#777">10</div><div class="t" style="left:1094.0px;width:30px;text-align:center;top:772px;font-size:8px;color:#777">12</div><div class="t" style="left:1126.3px;width:30px;text-align:center;top:772px;font-size:8px;color:#777">14</div><div class="t" style="left:1158.7px;width:30px;text-align:center;top:772px;font-size:8px;color:#777">16</div><div class="t" style="left:1191.1px;width:30px;text-align:center;top:772px;font-size:8px;color:#777">18</div><div class="t" style="left:1223.5px;width:30px;text-align:center;top:772px;font-size:8px;color:#777">20</div><div class="t" style="left:1255.9px;width:30px;text-align:center;top:772px;font-size:8px;color:#777">22</div><div class="t" style="left:1288.3px;width:30px;text-align:center;top:772px;font-size:8px;color:#777">24</div><div class="t" style="left:1320.7px;width:30px;text-align:center;top:772px;font-size:8px;color:#777">26</div><div class="t" style="left:1353.1px;width:30px;text-align:center;top:772px;font-size:8px;color:#777">28</div><div class="t" style="left:1385.5px;width:30px;text-align:center;top:772px;font-size:8px;color:#777">30</div><div class="t" style="left:1417.8px;width:30px;text-align:center;top:772px;font-size:8px;color:#777">32</div><div class="t" style="left:1450.2px;width:30px;text-align:center;top:772px;font-size:8px;color:#777">34</div><div class="t" style="left:1482.6px;width:30px;text-align:center;top:772px;font-size:8px;color:#777">36</div><div class="t" style="left:1515.0px;width:30px;text-align:center;top:772px;font-size:8px;color:#777">38</div><div class="t" style="left:1547.4px;width:30px;text-align:center;top:772px;font-size:8px;color:#777">40</div><div class="t" style="left:1579.8px;width:30px;text-align:center;top:772px;font-size:8px;color:#777">42</div><div class="t" style="left:1612.2px;width:30px;text-align:center;top:772px;font-size:8px;color:#777">44</div><div class="t" style="left:1644.6px;width:30px;text-align:center;top:772px;font-size:8px;color:#777">46</div><div class="t" style="left:1677.0px;width:30px;text-align:center;top:772px;font-size:8px;color:#777">48</div><div class="t" style="left:1709.4px;width:30px;text-align:center;top:772px;font-size:8px;color:#777">50</div><div class="t" style="left:1741.8px;width:30px;text-align:center;top:772px;font-size:8px;color:#777">52</div><div class="t" style="left:1774.1px;width:30px;text-align:center;top:772px;font-size:8px;color:#777">54</div><div class="t" style="left:1806.5px;width:30px;text-align:center;top:772px;font-size:8px;color:#777">56</div><div class="t" style="left:1838.9px;width:30px;text-align:center;top:772px;font-size:8px;color:#777">58</div><div class="a" style="left:947.0px;top:743px;width:1px;height:8px;background:#222"></div><div class="a" style="left:979.4px;top:743px;width:1px;height:8px;background:#222"></div><div class="a" style="left:1011.8px;top:743px;width:1px;height:8px;background:#222"></div><div class="a" style="left:1044.2px;top:743px;width:1px;height:8px;background:#222"></div><div class="a" style="left:1076.6px;top:743px;width:1px;height:8px;background:#222"></div><div class="a" style="left:1109.0px;top:743px;width:1px;height:8px;background:#222"></div><div class="a" style="left:1141.3px;top:743px;width:1px;height:8px;background:#222"></div><div class="a" style="left:1173.7px;top:743px;width:1px;height:8px;background:#222"></div><div class="a" style="left:1206.1px;top:743px;width:1px;height:8px;background:#222"></div><div class="a" style="left:1238.5px;top:743px;width:1px;height:8px;background:#222"></div><div class="a" style="left:1270.9px;top:743px;width:1px;height:8px;background:#222"></div><div class="a" style="left:1303.3px;top:743px;width:1px;height:8px;background:#222"></div><div class="a" style="left:1335.7px;top:743px;width:1px;height:8px;background:#222"></div><div class="a" style="left:1368.1px;top:743px;width:1px;height:8px;background:#222"></div><div class="a" style="left:1400.5px;top:743px;width:1px;height:8px;background:#222"></div><div class="a" style="left:1432.8px;top:743px;width:1px;height:8px;background:#222"></div><div class="a" style="left:1465.2px;top:743px;width:1px;height:8px;background:#222"></div><div class="a" style="left:1497.6px;top:743px;width:1px;height:8px;background:#222"></div><div class="a" style="left:1530.0px;top:743px;width:1px;height:8px;background:#222"></div><div class="a" style="left:1562.4px;top:743px;width:1px;height:8px;background:#222"></div><div class="a" style="left:1594.8px;top:743px;width:1px;height:8px;background:#222"></div><div class="a" style="left:1627.2px;top:743px;width:1px;height:8px;background:#222"></div><div class="a" style="left:1659.6px;top:743px;width:1px;height:8px;background:#222"></div><div class="a" style="left:1692.0px;top:743px;width:1px;height:8px;background:#222"></div><div class="a" style="left:1724.4px;top:743px;width:1px;height:8px;background:#222"></div><div class="a" style="left:1756.8px;top:743px;width:1px;height:8px;background:#222"></div><div class="a" style="left:1789.1px;top:743px;width:1px;height:8px;background:#222"></div><div class="a" style="left:1821.5px;top:743px;width:1px;height:8px;background:#222"></div><div class="a" style="left:1853.9px;top:743px;width:1px;height:8px;background:#222"></div><div class="a" style="left:1497px;top:748px;width:9px;height:8px;background:#e81010"></div><div class="a" style="left:1497px;top:714px;width:2px;height:4px;background:#111"></div><div class="a" style="left:1908px;top:722px;width:7px;height:50px;background:#fafae6;border:1px solid #333"></div><div class="a" style="left:1909px;top:762px;width:5px;height:9px;background:#52d0e8"></div><div class="a" style="left:1909px;top:732px;width:5px;height:1px;background:#999"></div><div class="a" style="left:1909px;top:742px;width:5px;height:1px;background:#999"></div><div class="a" style="left:1909px;top:752px;width:5px;height:1px;background:#999"></div><div class="a" style="left:1909px;top:762px;width:5px;height:1px;background:#999"></div><div class="a" style="left:924px;top:782px;width:996px;height:1px;background:#ddd"></div><svg class="a" style="left:929px;top:786px" width="12" height="17" viewBox="0 0 12 17"><path d="M6,1 L11,7 L8,7 L8,16 L4,16 L4,7 L1,7Z" fill="#1a9a1a"/></svg><svg class="a" style="left:955px;top:787px" width="15" height="16" viewBox="0 0 15 16"><rect x="4" y="3" width="7" height="11" fill="#ccc"/><path d="M1,2 L14,15 M14,2 L1,15" stroke="#d02020" stroke-width="1.8"/></svg><div class="t" style="left:985px;top:787px;font-size:15px;font-weight:bold;color:#111">]</div><svg class="a" style="left:1009px;top:786px" width="14" height="18" viewBox="0 0 14 18"><circle cx="8" cy="5" r="2.5" fill="#111"/><path d="M6,8 L10,8 L9,12 L12,16 L4,16 L7,12Z" fill="#111"/><path d="M2,3 h4 M4,3 v5" stroke="#d01010" stroke-width="1.3"/></svg><svg class="a" style="left:1036px;top:786px" width="14" height="18" viewBox="0 0 14 18"><circle cx="6" cy="5" r="2.5" fill="#d01010"/><path d="M4,8 L8,8 L7,12 L10,16 L2,16 L5,12Z" fill="#d01010"/><path d="M9,11 h4 M11,11 v5" stroke="#111" stroke-width="1.3"/></svg><svg class="a" style="left:1062px;top:786px" width="17" height="18" viewBox="0 0 17 18"><rect x="1" y="1" width="15" height="16" fill="#a06a3a"/><rect x="1" y="1" width="7.5" height="8" fill="#d8b890"/><rect x="8.5" y="9" width="7.5" height="8" fill="#d8b890"/><circle cx="5" cy="13" r="2.5" fill="#222"/><circle cx="12" cy="5" r="2.5" fill="#333"/></svg><div class="t" style="left:1082px;width:30px;text-align:center;top:785px;font-size:18px;color:#333">!!</div><div class="t" style="left:1109px;width:30px;text-align:center;top:785px;font-size:18px;color:#333">!</div><div class="t" style="left:1136px;width:30px;text-align:center;top:785px;font-size:18px;color:#333">!?</div><div class="t" style="left:1163px;width:30px;text-align:center;top:785px;font-size:18px;color:#333">?!</div><div class="t" style="left:1190px;width:30px;text-align:center;top:785px;font-size:18px;color:#333">?</div><div class="t" style="left:1217px;width:30px;text-align:center;top:785px;font-size:18px;color:#333">??</div><div class="t" style="left:1244px;width:30px;text-align:center;top:785px;font-size:18px;color:#333">+−</div><div class="t" style="left:1271px;width:30px;text-align:center;top:785px;font-size:18px;color:#333">±</div><div class="t" style="left:1298px;width:30px;text-align:center;top:785px;font-size:18px;color:#333">⩲</div><div class="t" style="left:1325px;width:30px;text-align:center;top:785px;font-size:18px;color:#333">=</div><div class="t" style="left:1352px;width:30px;text-align:center;top:785px;font-size:18px;color:#333">∞</div><div class="t" style="left:1379px;width:30px;text-align:center;top:785px;font-size:18px;color:#333"><u>∞</u></div><div class="t" style="left:1406px;width:30px;text-align:center;top:785px;font-size:18px;color:#333">⩱</div><div class="t" style="left:1433px;width:30px;text-align:center;top:785px;font-size:18px;color:#333">∓</div><div class="t" style="left:1460px;width:30px;text-align:center;top:785px;font-size:18px;color:#333">−+</div><div class="t" style="left:1487px;width:30px;text-align:center;top:785px;font-size:18px;color:#333">⇄</div><svg class="a" style="left:1520px;top:787px" width="18" height="16" viewBox="0 0 18 16"><path d="M2,10 L10,3 L16,7 L8,14Z" fill="#d8a0b0"/><path d="M2,10 L6,6.5 L12,10.5 L8,14Z" fill="#8aa0e0"/></svg><svg class="a" style="left:1551px;top:786px" width="10" height="18" viewBox="0 0 10 18"><rect x="2" y="1" width="6" height="11" rx="3" fill="#999" stroke="#555"/><path d="M1,9 Q5,15 9,9 M5,13 V17" fill="none" stroke="#555"/></svg><div class="a" style="left:914px;top:806px;width:1006px;height:5px;background:#f0f0f0"></div><div class="a" style="left:918px;top:783px;width:2px;height:22px;background:repeating-linear-gradient(180deg,#c0c0c0 0 2px,transparent 2px 5px)"></div><div class="a" style="left:914px;top:805px;width:1006px;height:1px;background:#e4e4e4"></div><div class="a" style="left:1378px;top:807px;width:77px;height:3px;background:repeating-linear-gradient(90deg,#c8c8c8 0 2px,transparent 2px 5px)"></div><div class="a" style="left:914px;top:811px;width:1006px;height:1px;background:#707070"></div><div class="a pt" style="top:812px"></div><div class="t" style="left:918px;top:817.2px;font-size:11px;color:#1a1a1a;font-weight:normal;">Engine: Fritz 15 SE</div><svg class="a" style="left:1888px;top:819px" width="10" height="6" viewBox="0 0 10 6"><path d="M0,0 L10,0 L5,6Z" fill="#111"/></svg><svg class="a" style="left:1905px;top:817px" width="10" height="10" viewBox="0 0 10 10"><path d="M1,1 L9,9 M9,1 L1,9" stroke="#111" stroke-width="1.8"/></svg><div class="a" style="left:918px;top:837px;width:76px;height:24px;background:#fff;border:1px solid #e0e0e0"></div><div class="t" style="left:756px;width:400px;text-align:center;top:842.3px;font-size:14px;color:#111;font-weight:normal;">Stopped</div><div class="a" style="left:1003px;top:838px;width:30px;height:22px;background:#e1e1e1;border:1px solid #adadad"></div><svg class="a" style="left:1008px;top:840px" width="19" height="19" viewBox="0 0 19 19"><circle cx="9.5" cy="9.5" r="8" fill="#2a5ad8" stroke="#1a3a98"/><circle cx="9.5" cy="7" r="5" fill="#7aa8f8" opacity=".6"/><path d="M7,5 L14,9.5 L7,14Z" fill="#fff"/></svg><div class="a" style="left:1042px;top:838px;width:30px;height:22px;background:#e1e1e1;border:1px solid #adadad"></div><svg class="a" style="left:1047px;top:840px" width="20" height="19" viewBox="0 0 20 19"><circle cx="8" cy="8" r="6" fill="#c8f0a8" stroke="#4a9a2a" stroke-width="1.4"/><path d="M5,8 h6 M8,5 v6" stroke="#2a6a1a" stroke-width="1.4"/><path d="M12,12 L18,18" stroke="#666" stroke-width="2.5"/></svg><div class="a" style="left:1079px;top:838px;width:30px;height:22px;background:#e1e1e1;border:1px solid #adadad"></div><svg class="a" style="left:1084px;top:840px" width="20" height="19" viewBox="0 0 20 19"><circle cx="8" cy="8" r="6" fill="#d8f048" stroke="#4a9a2a" stroke-width="1.4"/><path d="M5,8 h6" stroke="#2a6a1a" stroke-width="1.4"/><path d="M12,12 L18,18" stroke="#666" stroke-width="2.5"/></svg><div class="a" style="left:1119px;top:838px;width:58px;height:22px;background:#e1e1e1;border:1px solid #adadad"></div><div class="t" style="left:948px;width:400px;text-align:center;top:842.9px;font-size:13px;color:#111;font-weight:normal;">1 CPU</div><div class="a" style="left:1198px;top:837px;width:22px;height:24px;background:#f0f0f0;border:1px solid #e4e4e4"></div><svg class="a" style="left:1201px;top:839px" width="16" height="19" viewBox="0 0 16 19"><path d="M4,9 L4,5 A4,4 0 0 1 12,5 L12,6" fill="none" stroke="#111" stroke-width="2"/><rect x="2" y="9" width="12" height="9" fill="#111"/><rect x="7" y="11.5" width="2" height="4" fill="#fff"/></svg><div class="a" style="left:1363px;top:838px;width:49px;height:22px;background:#e1e1e1;border:1px solid #adadad"></div><div class="t" style="left:1187px;width:400px;text-align:center;top:842.9px;font-size:13px;color:#111;font-weight:normal;">Cloud</div><div class="a" style="left:918px;top:864px;width:24px;height:24px;background:#f0f0f0;border:1px solid #d0d0d0"></div><div class="a" style="left:922px;top:867px;width:17px;height:17px;border-radius:50%;background:radial-gradient(circle at 40% 35%,#ddd 0%,#999 55%,#777 100%)"></div><div class="a" style="left:950px;top:864px;width:79px;height:24px;background:#fff;border:1px solid #d4d4d4"></div><div class="a" style="left:1036px;top:864px;width:83px;height:24px;background:#fff;border:1px solid #d4d4d4"></div><div class="a" style="left:1127px;top:864px;width:117px;height:24px;background:#fff;border:1px solid #d4d4d4"></div><div class="a" style="left:1251px;top:864px;width:77px;height:24px;background:#fff;border:1px solid #d4d4d4"></div><div class="a" style="left:1335px;top:864px;width:54px;height:24px;background:#fff;border:1px solid #d4d4d4"></div><div class="a" style="left:918px;top:897px;width:495px;height:113px;background:#efefef;border:1px solid #cfcfcf"></div><div class="a" style="left:1419px;top:832px;width:2px;height:180px;background:#dcdcdc"></div><div class="a" style="left:1422px;top:832px;width:498px;height:182px;background:#f9f9fb;border:1.5px solid #666;border-right:none"></div><div class="a" style="left:1424px;top:834px;width:496px;height:40px;background:#ebebf0;border-bottom:1px solid #9a9aa0"></div><div class="a" style="left:1439px;top:843px;width:19px;height:20px;border-radius:3px;background:#222"></div><div class="a" style="left:1442px;top:846px;width:13px;height:13px;border-radius:50%;background:radial-gradient(circle at 50% 40%,#f4ff60 0%,#c8e800 70%,#8aa000 100%)"></div><div class="a" style="left:1475px;top:839px;width:98px;height:28px;background:#e4e4e4;border:1px solid #c0c0c0"></div><svg class="a" style="left:1481px;top:841px" width="22" height="24" viewBox="0 0 22 24"><circle cx="11" cy="11" r="9" fill="#777" stroke="#333"/><path d="M5,5 Q11,12 9,21 M17,5 Q11,12 13,21 M2,11 h18" fill="none" stroke="#ddd"/><path d="M2,22 L21,2" stroke="#d01818" stroke-width="2.4"/></svg><div class="t" style="left:1510px;top:847.6px;font-size:12px;color:#111;font-weight:normal;">Disconnect</div><div class="a" style="left:1585px;top:839px;width:98px;height:28px;background:#e4e4e4;border:1px solid #c0c0c0"></div><svg class="a" style="left:1593px;top:841px" width="18" height="24" viewBox="0 0 18 24"><path d="M4,2 L8,8 L6,21 Q9,24 11,21 L10,8 L12,3" fill="#c02020" stroke="#702020"/><path d="M3,3 L6,1 L8,4" fill="none" stroke="#2a8a9a" stroke-width="2"/></svg><div class="t" style="left:1627px;top:847.6px;font-size:12px;color:#111;font-weight:normal;">Settings</div><svg class="a" style="left:1866px;top:836px" width="38" height="34" viewBox="0 0 38 34"><path d="M3,3 L34,3 Q36,3 36,6 L36,24 Q36,27 33,27 L14,27 L8,32 L9,27 L6,27 Q3,27 3,24Z" fill="#fff" stroke="#aaa" stroke-width="1.4"/><path d="M10,15 L16,21 L29,7" fill="none" stroke="#e01828" stroke-width="4" stroke-linejoin="round"/></svg><div class="t" style="left:1434px;top:886.9px;font-size:13px;color:#111;font-weight:normal;">36...a5 37.Rfe2 Bd6</div><div class="t" style="left:1565px;top:886.9px;font-size:13px;color:#111;font-weight:normal;">-0.34</div><div class="t" style="left:1611px;top:886.9px;font-size:13px;color:#1f9226;font-weight:normal;">depth=25</div><div class="t" style="left:1684px;top:886.9px;font-size:13px;color:#111;font-weight:normal;">Stockfish 050714</div><div class="t" style="left:1824px;top:886.9px;font-size:13px;color:#111;font-weight:normal;font-style:italic">Software_012</div><div class="t" style="left:1911px;top:886.9px;font-size:13px;color:#111;font-weight:normal;">2</div><div class="t" style="left:1434px;top:903.9px;font-size:13px;color:#111;font-weight:normal;">36...a5 37.Rfe2 Bd6</div><div class="t" style="left:1565px;top:903.9px;font-size:13px;color:#111;font-weight:normal;">-0.32</div><div class="t" style="left:1611px;top:903.9px;font-size:13px;color:#1f9226;font-weight:normal;">depth=28</div><div class="t" style="left:1684px;top:903.9px;font-size:13px;color:#111;font-weight:normal;">Stockfish 8</div><div class="t" style="left:1824px;top:903.9px;font-size:13px;color:#111;font-weight:normal;font-style:italic"></div><div class="t" style="left:1911px;top:903.9px;font-size:13px;color:#111;font-weight:normal;">2</div><div class="t" style="left:1434px;top:920.9px;font-size:13px;color:#111;font-weight:normal;">36...a5 37.Rfe2 Bd6</div><div class="t" style="left:1565px;top:920.9px;font-size:13px;color:#111;font-weight:normal;">-0.42</div><div class="t" style="left:1611px;top:920.9px;font-size:13px;color:#1f9226;font-weight:normal;">depth=22</div><div class="t" style="left:1684px;top:920.9px;font-size:13px;color:#111;font-weight:normal;">Deep Rybka 4 x64</div><div class="t" style="left:1824px;top:920.9px;font-size:13px;color:#111;font-weight:normal;font-style:italic">Pacificrabbit</div><div class="t" style="left:1911px;top:920.9px;font-size:13px;color:#111;font-weight:normal;">1</div><div class="t" style="left:1789px;top:886.9px;font-size:13px;color:#111;font-weight:normal;">SSE</div><div class="t" style="left:1434px;top:937.9px;font-size:13px;color:#111;font-weight:normal;">Visits=380</div><div class="a" style="left:1434px;top:964px;width:160px;height:16px;background:#fff;border:1.5px solid #111"></div><div class="a" style="left:1424px;top:986px;width:495px;height:12px;overflow:hidden"><div class="t" style="left:10px;top:4px;font-size:13px;color:#111">Main = 36...a5 37.b3&nbsp;&nbsp; -0.26/33</div></div><div class="a" style="left:1424px;top:998px;width:495px;height:15px;background:#e6e6e6"></div><div class="a" style="left:1424px;top:998px;width:17px;height:15px;background:#fff;border:1px solid #ddd"></div><svg class="a" style="left:1429px;top:1001px" width="5" height="9" viewBox="0 0 5 9"><path d="M5,0 L5,9 L0,4.5Z" fill="#666"/></svg><div class="a" style="left:1441px;top:999px;width:16px;height:13px;background:#fff"></div><div class="a" style="left:1902px;top:998px;width:17px;height:15px;background:#fff;border:1px solid #ddd"></div><svg class="a" style="left:1908px;top:1001px" width="5" height="9" viewBox="0 0 5 9"><path d="M0,0 L0,9 L5,4.5Z" fill="#666"/></svg>
<div id="status" class="a"><div class="t" style="left:10px;top:7px;font-size:11.1px;color:#333">C65: Ruy Lopez: Berlin Defence (3...Nf6), unusual lines and 4 0-0 Bc5</div></div>
</body></html>
